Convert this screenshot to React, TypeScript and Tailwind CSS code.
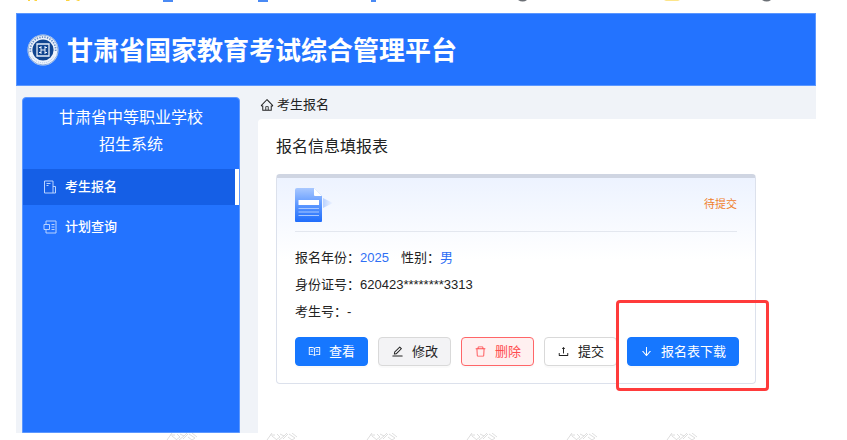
import type { ReactNode } from 'react';
import {
  AiOutlineArrowDown,
  AiOutlineDelete,
  AiOutlineEdit,
  AiOutlineHome,
  AiOutlineRead,
  AiOutlineUpload,
} from 'react-icons/ai';

function TopMarks() {
  return (
    <svg className="block h-[13px] w-full" aria-hidden="true">
      <g fill="#fdd33c">
        <path d="M28 0h2v1h-2zM34 0h3v1h-2zM66 0h4l-1 1h-3zM76 0h3l1 1h-2z" />
      </g>
      <g fill="#4a8af4">
        <path d="M163 0h10v2h-10zM258 0h10v2h-10zM371 0h5v2h-5z" />
      </g>
      <path d="M518 0h9q-4 3-9 0zM762 0h9q-4 3-9 0z" fill="#6b6f75" />
      <path d="M664 0h16l-2 1h-12z" fill="#fde58a" />
    </svg>
  );
}

function Emblem() {
  return (
    <svg viewBox="0 0 32 32" className="size-8 shrink-0" aria-hidden="true">
      <circle cx="16" cy="16" r="15.5" fill="#eef4fd" />
      <circle cx="16" cy="16" r="15" fill="none" stroke="#4e7fc4" strokeWidth="0.6" />
      <path
        d="M3.500 18a12.700 12.700 0 1 1 25 0"
        fill="none"
        stroke="#6a8fc6"
        strokeWidth="1.800"
        strokeDasharray="1.4 1.2"
      />
      <path d="M5 22.500a12.700 12.700 0 0 0 22 0" fill="none" stroke="#a9c0e2" strokeDasharray="1 1" />
      <circle cx="16" cy="16" r="10.600" fill="#11458f" />
      <path d="M10 10h12v12H10z" fill="none" stroke="#e8f0fb" strokeWidth="1.3" />
      <path d="M14 12v8M18 12v8M14 16h4M12 13.500h2M18 13.500h2M12 18.500h2M18 18.500h2" stroke="#e8f0fb" />
    </svg>
  );
}

function FormIcon() {
  return (
    <svg viewBox="0 0 14 14" className="size-[14px]" fill="none" stroke="currentColor" aria-hidden="true">
      <path d="M10 13H1.5V1H10v12h2.5V6.500H10M3.500 3.500h4M3.500 5.500h2" />
    </svg>
  );
}

function PlanIcon() {
  return (
    <svg viewBox="0 0 14 14" className="size-[14px]" fill="none" stroke="currentColor" aria-hidden="true">
      <path d="M3 4V1h10v12H3v-3M1 4.500h5.500v5H1zM8.500 4.500h3M8.500 7h3M8.500 9.500h3" />
    </svg>
  );
}

function DocumentIcon() {
  return (
    <svg viewBox="0 0 40 34" className="h-[34px] w-10" aria-hidden="true">
      <defs>
        <linearGradient id="doc" x1="0" y1="0" x2="0" y2="1">
          <stop offset="0" stopColor="#a9c8ff" />
          <stop offset="0.5" stopColor="#5c97ff" />
          <stop offset="1" stopColor="#1f6dfb" />
        </linearGradient>
        <linearGradient id="trail" x1="0" y1="0" x2="1" y2="0">
          <stop offset="0" stopColor="#b9d2ff" />
          <stop offset="1" stopColor="#f1f5ff" />
        </linearGradient>
      </defs>
      <path d="M2 0h17l8 8v25q0 1-1 1H1q-1 0-1-1V2q0-2 2-2z" fill="url(#doc)" />
      <path d="M19 0l8 8h-7q-1 0-1-1z" fill="#fff" />
      <path d="M3.500 12H24v5H3.500z" fill="#fff" />
      <path d="M3.500 20.500H24M3.500 24H24M3.500 27.500H24" stroke="#a9c8ff" />
      <path d="M28 10l10 5-10 5z" fill="url(#trail)" />
    </svg>
  );
}

function MenuItem({ icon, label, active = false }: { icon: ReactNode; label: string; active?: boolean }) {
  return (
    <a
      href="#"
      className={
        active
          ? 'flex h-9 items-center gap-2 border-r-4 border-white bg-[#155fe6] pl-5 font-medium text-white'
          : 'flex h-9 items-center gap-2 border-r-4 border-transparent pl-5 font-medium text-white'
      }
    >
      <span className="text-[#b9d3ff]">{icon}</span>
      {label}
    </a>
  );
}

const tones = {
  primary: 'border-[#1677ff] bg-[#1677ff] text-white',
  muted: 'border-[#d9d9d9] bg-[#f3f3f5] text-[#222]',
  danger: 'border-[#ff6668] bg-[#fff0f0] text-[#ff4d4f]',
  plain: 'border-[#d9d9d9] bg-white text-[#222]',
};

function ActionButton({ icon, label, tone }: { icon: ReactNode; label: string; tone: keyof typeof tones }) {
  return (
    <button
      type="button"
      className={`flex h-[29px] shrink-0 items-center gap-2 whitespace-nowrap rounded border px-3 shadow-[0_2px_0_rgba(0,0,0,0.02)] ${tones[tone]}`}
    >
      <span className="text-[13px]">{icon}</span>
      {label}
    </button>
  );
}

function Watermarks() {
  return (
    <svg className="block h-[7px] w-full" fill="none" stroke="#dedede" aria-hidden="true">
      <defs>
        <path
          id="mark"
          d="M3 2h5M5 0l-5 7M5 3l5 4M10 1l3 3-4 3M13 1l4 2 3-3M17 3l-5 4M21 1l-5 5M22 1l6 4-3 2M21 4l4 3M25 0l5 4"
        />
      </defs>
      <use href="#mark" x="167" />
      <use href="#mark" x="267" />
      <use href="#mark" x="367" />
      <use href="#mark" x="467" />
      <use href="#mark" x="567" />
      <use href="#mark" x="667" />
    </svg>
  );
}

export default function App() {
  return (
    <div className="bg-white font-['Noto_Sans','Noto_Sans_CJK_SC',sans-serif] text-[13px] text-[#222]">
      <TopMarks />
      <div className="ml-4 mr-[31px] bg-[#f0f3f8]">
        <header className="flex h-[73px] items-center gap-2 border border-[#5b97ff] bg-[#2373ff] px-[10px] text-white">
          <Emblem />
          <h1 className="text-[26px] font-bold leading-9">甘肃省国家教育考试综合管理平台</h1>
        </header>

        <div className="flex gap-[18px] pl-[6px]">
          <nav className="mt-[11px] w-[218px] shrink-0 rounded-t border border-[#5b97ff] bg-[#2373ff]">
            <h2 className="px-8 pb-[11px] pt-[6px] text-center text-[16px] leading-[27px] text-white">
              甘肃省中等职业学校
              <br />
              招生系统
            </h2>
            <div className="flex flex-col gap-1">
              <MenuItem icon={<FormIcon />} label="考生报名" active />
              <MenuItem icon={<PlanIcon />} label="计划查询" />
            </div>
          </nav>

          <main className="min-w-0 flex-1">
            <div className="flex h-[33px] items-center gap-[3px] pl-[2px] pt-[5px]">
              <AiOutlineHome className="size-[14px]" />
              <span>考生报名</span>
            </div>
            <section className="min-h-[314px] rounded-tl bg-white px-[18px] pt-[15px]">
              <h3 className="text-[16px] leading-6">报名信息填报表</h3>

              <article className="mt-4 max-w-[480px] rounded border border-t-4 border-[#dce1ec] border-t-[#cfd5e2] bg-linear-to-b from-[#edf3ff] to-white to-40% px-[18px] pb-[17px]">
                <div className="flex h-[54px] items-center justify-between border-b border-[#e3e7ef]">
                  <DocumentIcon />
                  <span className="text-[11px] text-[#f0802c]">待提交</span>
                </div>
                <div className="pb-3 pt-3 font-['Liberation_Sans','Noto_Sans_CJK_SC',sans-serif] leading-[27px]">
                  <p className="flex gap-3">
                    <span>
                      报名年份：<span className="text-[#2f6ff5]">2025</span>
                    </span>
                    <span>
                      性别：<span className="text-[#2f6ff5]">男</span>
                    </span>
                  </p>
                  <p>身份证号：620423********3313</p>
                  <p>考生号：-</p>
                </div>
                <div className="flex gap-[10px]">
                  <ActionButton icon={<AiOutlineRead />} label="查看" tone="primary" />
                  <ActionButton icon={<AiOutlineEdit />} label="修改" tone="muted" />
                  <ActionButton icon={<AiOutlineDelete />} label="删除" tone="danger" />
                  <ActionButton icon={<AiOutlineUpload />} label="提交" tone="plain" />
                  <div className="relative">
                    <ActionButton icon={<AiOutlineArrowDown />} label="报名表下载" tone="primary" />
                    <div className="pointer-events-none absolute -left-[11px] -top-[37px] h-[91px] w-[153px] rounded border-[3px] border-[#ff3b3b]" />
                  </div>
                </div>
              </article>
            </section>
          </main>
        </div>
      </div>
      <Watermarks />
    </div>
  );
}
